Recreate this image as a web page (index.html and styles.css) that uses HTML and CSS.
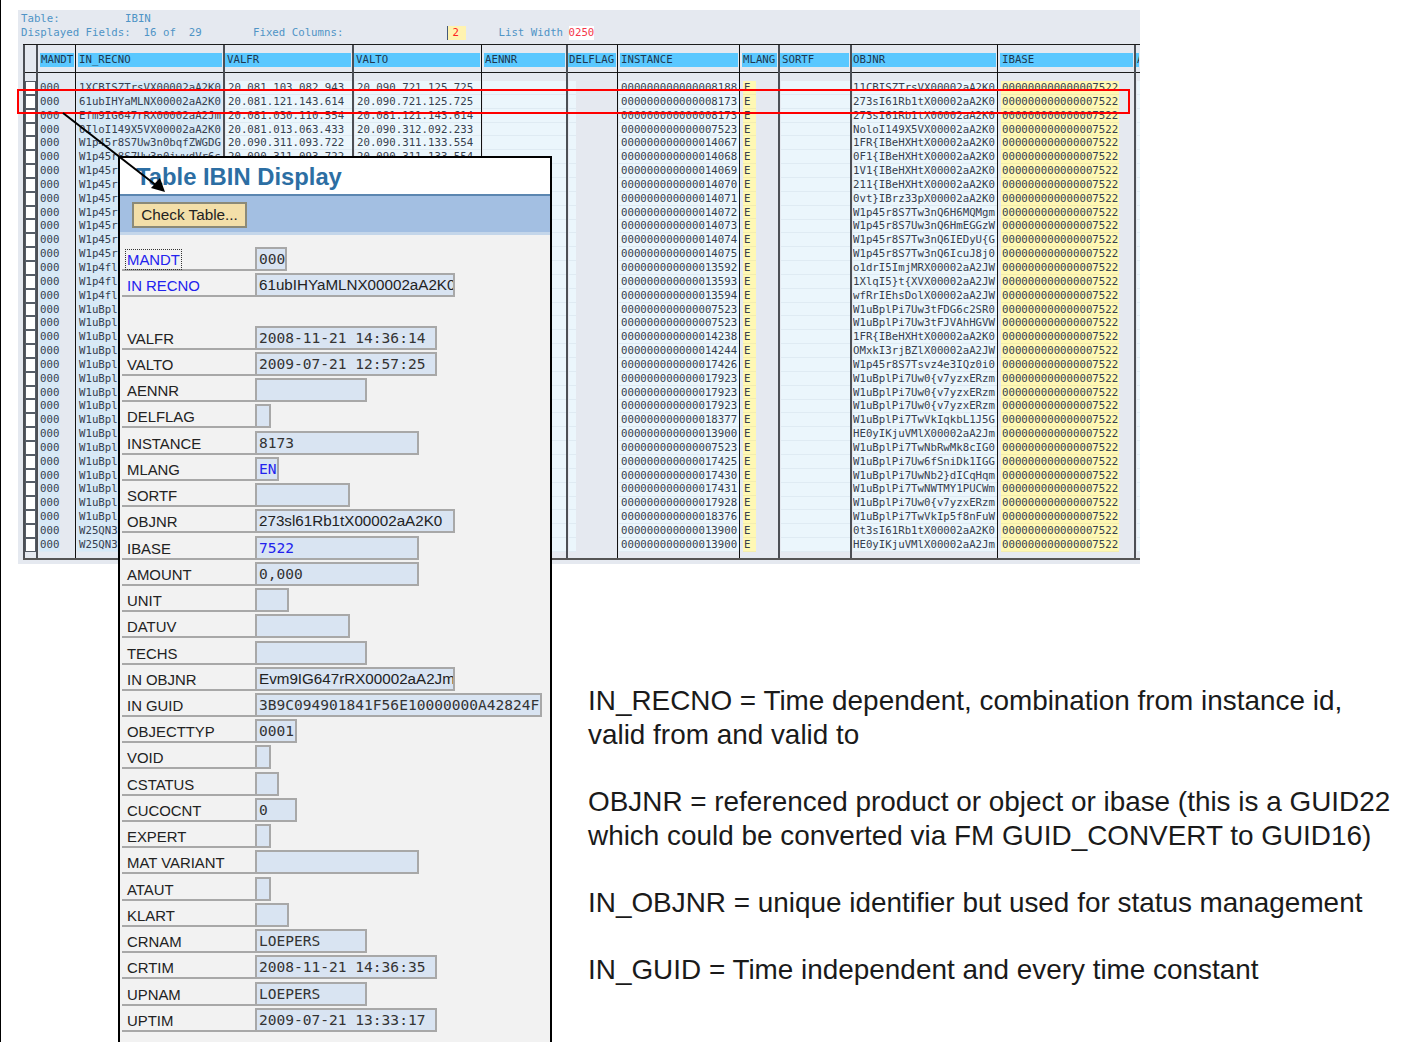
FILE: index.html
```html
<!DOCTYPE html>
<html lang="en">
<head>
<meta charset="utf-8">
<title>Table IBIN Display</title>
<link rel="stylesheet" href="styles.css">
</head>
<body>
<main class="page">
<section class="panel">
  <header class="info">
    <div class="info-line"><span class="c-table">Table:</span><span>IBIN</span></div>
    <div class="info-line"><span class="c-fields">Displayed Fields:  16 of  29</span><span class="c-fixed">Fixed Columns:</span><span class="fixed-val">2</span><span class="c-list">List Width</span><span class="list-val">0250</span></div>
  </header>
  <div class="grid">
    <div class="col w-sel rule-dark"><div class="hd hd-empty"></div><div class="body sels">
      <i></i><i></i><i></i><i></i><i></i><i></i><i></i><i></i><i></i><i></i><i></i><i></i><i></i><i></i><i></i><i></i><i></i><i></i><i></i><i></i><i></i><i></i><i></i><i></i><i></i><i></i><i></i><i></i><i></i><i></i><i></i><i></i><i></i><i></i>
    </div></div>
    <div class="col w-mandt rule-dark"><div class="hd"><b>MANDT</b></div><div class="body lines key">
      <div>000</div><div>000</div><div>000</div><div>000</div><div>000</div><div>000</div><div>000</div><div>000</div><div>000</div><div>000</div><div>000</div><div>000</div><div>000</div><div>000</div><div>000</div><div>000</div><div>000</div><div>000</div><div>000</div><div>000</div><div>000</div><div>000</div><div>000</div><div>000</div><div>000</div><div>000</div><div>000</div><div>000</div><div>000</div><div>000</div><div>000</div><div>000</div><div>000</div><div>000</div>
    </div></div>
    <div class="col w-recno rule-black"><div class="hd"><b>IN_RECNO</b></div><div class="body lines key">
      <div>1XCBISZTrsVX00002aA2K0</div><div>61ubIHYaMLNX00002aA2K0</div><div>Efm9IG647rRX00002aA2Jm</div><div>0IloI149X5VX00002aA2K0</div><div>W1p45r8S7Uw3n0bqfZWGDG</div><div>W1p45r8S7Uw3n0jwvdVr6s</div>
      <div>W1p45r</div><div>W1p45r</div><div>W1p45r</div><div>W1p45r</div><div>W1p45r</div><div>W1p45r</div><div>W1p45r</div><div>W1p4fl</div><div>W1p4fl</div><div>W1p4fl</div>
      <div>W1uBpl</div><div>W1uBpl</div><div>W1uBpl</div><div>W1uBpl</div><div>W1uBpl</div><div>W1uBpl</div><div>W1uBpl</div><div>W1uBpl</div><div>W1uBpl</div><div>W1uBpl</div><div>W1uBpl</div><div>W1uBpl</div><div>W1uBpl</div><div>W1uBpl</div><div>W1uBpl</div><div>W1uBpl</div><div>W25QN3</div><div>W25QN3</div>
    </div></div>
    <div class="col w-date rule-gray"><div class="hd"><b>VALFR</b></div><div class="body lines fill">
      <div>20.081.103.082.943</div><div>20.081.121.143.614</div><div>20.081.030.110.554</div><div>20.081.013.063.433</div><div>20.090.311.093.722</div><div>20.090.311.093.722</div>
    </div></div>
    <div class="col w-date rule-gray"><div class="hd"><b>VALTO</b></div><div class="body lines fill">
      <div>20.090.721.125.725</div><div>20.090.721.125.725</div><div>20.081.121.143.614</div><div>20.090.312.092.233</div><div>20.090.311.133.554</div><div>20.090.311.133.554</div>
    </div></div>
    <div class="col w-aennr rule-black"><div class="hd"><b>AENNR</b></div><div class="body fill"></div></div>
    <div class="col w-delflag rule-gray"><div class="hd"><b>DELFLAG</b></div><div class="body fill narrow"></div></div>
    <div class="col w-instance rule-black"><div class="hd"><b>INSTANCE</b></div><div class="body lines fill">
      <div>000000000000008188</div><div>000000000000008173</div><div>000000000000008173</div><div>000000000000007523</div><div>000000000000014067</div><div>000000000000014068</div><div>000000000000014069</div><div>000000000000014070</div><div>000000000000014071</div><div>000000000000014072</div><div>000000000000014073</div><div>000000000000014074</div><div>000000000000014075</div><div>000000000000013592</div><div>000000000000013593</div><div>000000000000013594</div><div>000000000000007523</div><div>000000000000007523</div><div>000000000000014238</div><div>000000000000014244</div><div>000000000000017426</div><div>000000000000017923</div><div>000000000000017923</div><div>000000000000017923</div><div>000000000000018377</div><div>000000000000013900</div><div>000000000000007523</div><div>000000000000017425</div><div>000000000000017430</div><div>000000000000017431</div><div>000000000000017928</div><div>000000000000018376</div><div>000000000000013900</div><div>000000000000013900</div>
    </div></div>
    <div class="col w-mlang rule-black"><div class="hd"><b>MLANG</b></div><div class="body lines yellow short">
      <div>E</div><div>E</div><div>E</div><div>E</div><div>E</div><div>E</div><div>E</div><div>E</div><div>E</div><div>E</div><div>E</div><div>E</div><div>E</div><div>E</div><div>E</div><div>E</div><div>E</div><div>E</div><div>E</div><div>E</div><div>E</div><div>E</div><div>E</div><div>E</div><div>E</div><div>E</div><div>E</div><div>E</div><div>E</div><div>E</div><div>E</div><div>E</div><div>E</div><div>E</div>
    </div></div>
    <div class="col w-sortf rule-gray"><div class="hd"><b>SORTF</b></div><div class="body fill"></div></div>
    <div class="col w-objnr rule-gray"><div class="hd"><b>OBJNR</b></div><div class="body lines fill">
      <div>11CBISZTrsVX00002aA2K0</div><div>273sI61Rb1tX00002aA2K0</div><div>273sI61Rb1tX00002aA2K0</div><div>NoloI149X5VX00002aA2K0</div><div>1FR{IBeHXHtX00002aA2K0</div><div>0F1{IBeHXHtX00002aA2K0</div><div>1V1{IBeHXHtX00002aA2K0</div><div>211{IBeHXHtX00002aA2K0</div><div>0vt}IBrz33pX00002aA2K0</div><div>W1p45r8S7Tw3nQ6H6MQMgm</div><div>W1p45r8S7Uw3nQ6HmEGGzW</div><div>W1p45r8S7Tw3nQ6IEDyU{G</div><div>W1p45r8S7Tw3nQ6IcuJ8j0</div><div>o1drI5ImjMRX00002aA2JW</div><div>1XlqI5}t{XVX00002aA2JW</div><div>wfRrIEhsDolX00002aA2JW</div><div>W1uBplPi7Uw3tFDG6c2SR0</div><div>W1uBplPi7Uw3tFJVAhHGVW</div><div>1FR{IBeHXHtX00002aA2K0</div><div>OMxkI3rjBZlX00002aA2JW</div><div>W1p45r8S7Tsvz4e3IQz0i0</div><div>W1uBplPi7Uw0{v7yzxERzm</div><div>W1uBplPi7Uw0{v7yzxERzm</div><div>W1uBplPi7Uw0{v7yzxERzm</div><div>W1uBplPi7TwVkIqkbL1J5G</div><div>HE0yIKjuVMlX00002aA2Jm</div><div>W1uBplPi7TwNbRwMk8cIG0</div><div>W1uBplPi7Uw6fSniDk1IGG</div><div>W1uBplPi7UwNb2}dICqHqm</div><div>W1uBplPi7TwNWTMY1PUCWm</div><div>W1uBplPi7Uw0{v7yzxERzm</div><div>W1uBplPi7TwVkIp5f8nFuW</div><div>0t3sI61Rb1tX00002aA2K0</div><div>HE0yIKjuVMlX00002aA2Jm</div>
    </div></div>
    <div class="col w-ibase rule-black"><div class="hd"><b>IBASE</b></div><div class="body lines yellow">
      <div>000000000000007522</div><div>000000000000007522</div><div>000000000000007522</div><div>000000000000007522</div><div>000000000000007522</div><div>000000000000007522</div><div>000000000000007522</div><div>000000000000007522</div><div>000000000000007522</div><div>000000000000007522</div><div>000000000000007522</div><div>000000000000007522</div><div>000000000000007522</div><div>000000000000007522</div><div>000000000000007522</div><div>000000000000007522</div><div>000000000000007522</div><div>000000000000007522</div><div>000000000000007522</div><div>000000000000007522</div><div>000000000000007522</div><div>000000000000007522</div><div>000000000000007522</div><div>000000000000007522</div><div>000000000000007522</div><div>000000000000007522</div><div>000000000000007522</div><div>000000000000007522</div><div>000000000000007522</div><div>000000000000007522</div><div>000000000000007522</div><div>000000000000007522</div><div>000000000000007522</div><div>000000000000007522</div>
    </div></div>
    <div class="col w-last rule-gray"><div class="hd"><b>A</b></div><div class="body fill"></div></div>
  </div>
</section>

<div class="redbox"></div>

<section class="dialog">
  <h1 class="dlg-title">Table IBIN Display</h1>
  <div class="dlg-bar"><button class="dlg-btn" type="button">Check Table...</button></div>
  <div class="form">
    <div class="row"><label class="lbl blue"><span class="focus">MANDT</span></label><span class="fld f32">000</span></div>
    <div class="row"><label class="lbl blue">IN RECNO</label><span class="fld f200 prop">61ubIHYaMLNX00002aA2K0</span></div>
    <div class="row row-gap"></div>
    <div class="row"><label class="lbl">VALFR</label><span class="fld f182">2008-11-21 14:36:14</span></div>
    <div class="row"><label class="lbl">VALTO</label><span class="fld f182">2009-07-21 12:57:25</span></div>
    <div class="row"><label class="lbl">AENNR</label><span class="fld f112"></span></div>
    <div class="row"><label class="lbl">DELFLAG</label><span class="fld f16"></span></div>
    <div class="row"><label class="lbl">INSTANCE</label><span class="fld f164">8173</span></div>
    <div class="row"><label class="lbl">MLANG</label><span class="fld f24 blue">EN</span></div>
    <div class="row"><label class="lbl">SORTF</label><span class="fld f94"></span></div>
    <div class="row"><label class="lbl">OBJNR</label><span class="fld f200 prop">273sl61Rb1tX00002aA2K0</span></div>
    <div class="row"><label class="lbl">IBASE</label><span class="fld f164 blue">7522</span></div>
    <div class="row"><label class="lbl">AMOUNT</label><span class="fld f164">0,000</span></div>
    <div class="row"><label class="lbl">UNIT</label><span class="fld f34"></span></div>
    <div class="row"><label class="lbl">DATUV</label><span class="fld f94"></span></div>
    <div class="row"><label class="lbl">TECHS</label><span class="fld f112"></span></div>
    <div class="row"><label class="lbl">IN OBJNR</label><span class="fld f200 prop">Evm9IG647rRX00002aA2Jm</span></div>
    <div class="row"><label class="lbl">IN GUID</label><span class="fld f287">3B9C094901841F56E10000000A42824F</span></div>
    <div class="row"><label class="lbl">OBJECTTYP</label><span class="fld f42">0001</span></div>
    <div class="row"><label class="lbl">VOID</label><span class="fld f16"></span></div>
    <div class="row"><label class="lbl">CSTATUS</label><span class="fld f24"></span></div>
    <div class="row"><label class="lbl">CUCOCNT</label><span class="fld f42">0</span></div>
    <div class="row"><label class="lbl">EXPERT</label><span class="fld f16"></span></div>
    <div class="row"><label class="lbl">MAT VARIANT</label><span class="fld f164"></span></div>
    <div class="row"><label class="lbl">ATAUT</label><span class="fld f16"></span></div>
    <div class="row"><label class="lbl">KLART</label><span class="fld f34"></span></div>
    <div class="row"><label class="lbl">CRNAM</label><span class="fld f112">LOEPERS</span></div>
    <div class="row"><label class="lbl">CRTIM</label><span class="fld f182">2008-11-21 14:36:35</span></div>
    <div class="row"><label class="lbl">UPNAM</label><span class="fld f112">LOEPERS</span></div>
    <div class="row"><label class="lbl">UPTIM</label><span class="fld f182">2009-07-21 13:33:17</span></div>
  </div>
</section>

<svg class="arrow" viewBox="0 0 110 90" width="110" height="90" aria-hidden="true">
  <path d="M2 2 L96 75" fill="none" stroke="#000" stroke-width="2"/>
  <polygon points="104,81 90,77 99,67" fill="#000"/>
</svg>

<section class="notes">
  <p>IN_RECNO = Time dependent, combination from instance id,<br>valid from and valid to</p>
  <p>OBJNR = referenced product or object or ibase (this is a GUID22<br>which could be converted via FM GUID_CONVERT to GUID16)</p>
  <p>IN_OBJNR = unique identifier but used for status management</p>
  <p>IN_GUID = Time independent and every time constant</p>
</section>
</main>
</body>
</html>
```
FILE: styles.css
```css
* { box-sizing: border-box; }
html, body { margin: 0; height: 100%; overflow: hidden; background: #fff; }
.page { position: relative; height: 1042px; border-left: 1px solid #000; overflow: hidden; padding-top: 10px; }

.panel { width: 1122px; height: 554px; margin-left: 17px; background: #e5e9f0; font: 10.72px/14px "DejaVu Sans Mono", monospace; color: #36404e; overflow: hidden; }
.info { height: 34px; padding: 2px 0 0 3px; color: #4f94c6; }
.info-line { display: flex; height: 14px; white-space: pre; }
.c-table { width: 104px; }
.c-fields { width: 232px; }
.c-fixed { width: 193.5px; }
.fixed-val { width: 19px; height: 14px; padding-left: 5px; margin-right: 33px; color: #f22; background: #fff3b0; border-left: 1px solid #44597a; }
.c-list { width: 70px; }
.list-val { color: #f5354a; background: #fff; }

.grid { display: flex; margin-left: 5px; height: 516px; border-top: 1px solid #1c1c1c; border-bottom: 2px solid #555; }
.col { flex: none; min-width: 0; overflow: hidden; }
.rule-black { border-left: 1px solid #111; }
.rule-dark { border-left: 2px solid #4c4f55; }
.rule-gray { border-left: 2px solid #4c4f55; }
.w-sel { width: 13px; }
.w-mandt { width: 39px; }
.w-recno { width: 148px; }
.w-date { width: 129px; }
.w-aennr { width: 85px; }
.w-delflag { width: 51px; }
.w-instance { width: 122px; }
.w-mlang { width: 39px; }
.w-sortf { width: 72px; }
.w-objnr { width: 147px; }
.w-ibase { width: 137px; }
.w-last { width: 6px; }

.hd { height: 28px; padding-top: 8px; border-bottom: 1px solid #1c1c1c; }
.hd b { display: block; height: 14px; margin: 0 1px 0 2px; padding-left: 1px; background: #5ac8ff; color: #1d3850; font-weight: normal; white-space: nowrap; overflow: hidden; }
.rule-gray .hd b { margin-left: 0; }
.w-date .hd b, .w-sortf .hd b { padding-left: 2px; }
.w-ibase .hd b { padding-left: 2px; }
.hd-empty { border-bottom-color: #1c1c1c; }

.body { margin-top: 8px; height: 471px; }
.lines div { height: 13.85px; line-height: 13px; padding-left: 2px; white-space: pre; overflow: hidden; border-bottom: 1px solid #dce9f2; }
.w-objnr .lines div { padding-left: 0; }
.key div { background: #d6e9f7; margin-left: 1px; margin-right: 1px; }
.w-mandt .key div { width: 21px; padding-left: 1px; }
.fill { background: repeating-linear-gradient(#ebf6fc 0, #ebf6fc 12.85px, #dfebf3 12.85px, #dfebf3 13.85px); margin-left: 1px; }
.lines.fill div { border-bottom-color: transparent; }
.fill.narrow { width: 7px; }
.yellow { background: none; }
.yellow div { background: #fff8b4; margin-left: 3px; margin-right: 15px; padding-left: 1px; border-bottom-color: #f3edb0; }
.short div { margin-right: 22px; }

.sels i { display: block; height: 13.85px; border: 1px solid #555c66; background: #fff; }

.redbox { position: absolute; left: 16px; top: 89px; width: 1113px; height: 25px; border: 2px solid #f00; }

.dialog { position: absolute; left: 117px; top: 156px; width: 434px; height: 886px; background: #f2f2f2; border: 2px solid #000; border-bottom: 0; display: flex; flex-direction: column; }
.dlg-title { flex: none; margin: 0; height: 38px; padding: 4px 0 0 16px; background: #fff; border-bottom: 2px solid #5b86b0; color: #2c6ea3; font: bold 23.8px/30px "Liberation Sans", Arial, sans-serif; }
.dlg-bar { flex: none; height: 39px; padding: 6px 0 0 12px; background: #a3bfe2; border-bottom: 3px solid #c4d6ea; }
.dlg-btn { display: block; width: 115px; height: 26px; padding: 0; background: #f3dfa9; border: 2px solid #8b8a78; color: #222; font: 15.3px/22px "Liberation Sans", Arial, sans-serif; }

.form { padding: 12px 0 0 2px; font: 14.9px/23px "Liberation Sans", Arial, sans-serif; color: #222; }
.row { display: flex; height: 26.24px; }
.lbl { width: 133px; height: 24px; padding: 2px 0 0 5px; border-bottom: 2px solid #a8a8a8; white-space: nowrap; }
.blue { color: #2222ee; }
.focus { display: inline-block; height: 21px; line-height: 21px; margin-top: -1px; border: 1px dotted #333; padding: 0 1px; margin-left: -2px; }
.fld { flex: none; height: 24px; padding-left: 2px; border: 2px solid #a8a8a8; background: #d9e4f2; font: 14.55px/20px "DejaVu Sans Mono", monospace; color: #333; white-space: pre; overflow: hidden; }
.fld.blue { color: #2222ee; }
.prop { font: 15.2px/20px "Liberation Sans", Arial, sans-serif; color: #222; }
.f16 { width: 16px; } .f24 { width: 24px; } .f32 { width: 32px; } .f34 { width: 34px; } .f42 { width: 42px; }
.f94 { width: 95px; } .f112 { width: 112px; } .f164 { width: 164px; } .f182 { width: 182px; } .f200 { width: 200px; } .f287 { width: 287px; }

.arrow { position: absolute; left: 60px; top: 111px; }

.notes { margin: 120px 0 0 587px; font: 27.9px/33.65px "Liberation Sans", Arial, sans-serif; color: #1a1a1a; white-space: nowrap; }
.notes p { margin: 0 0 33.65px; }
```
